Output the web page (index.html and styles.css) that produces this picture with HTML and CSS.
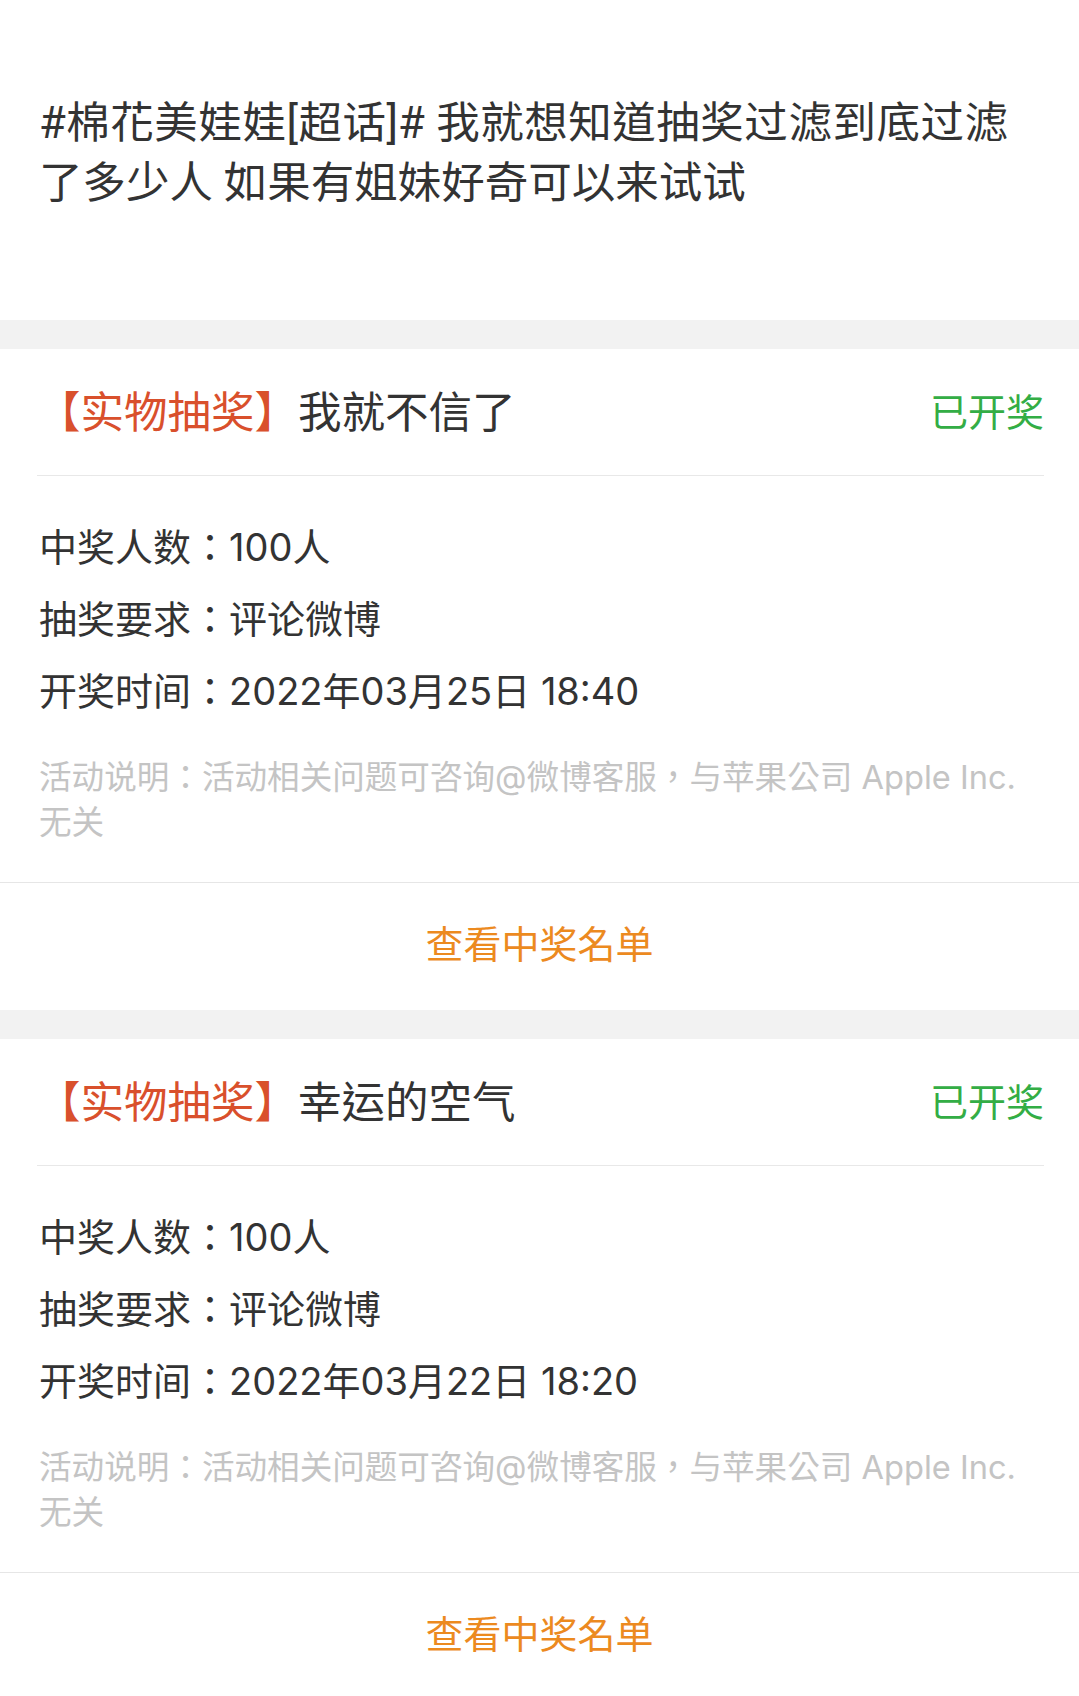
FILE: index.html
```html
<html>
  <head>
    <title>抽奖详情</title>
    <meta charset="utf-8">
    <link rel="stylesheet" href="styles.css">
  </head>
  <body>
    <div class="post">
      <p class="post-text">
        <span class="post-line">#棉花美娃娃[超话]# 我就想知道抽奖过滤到底过滤</span>了多少人 如果有姐妹好奇可以来试试
      </p>
    </div>

    <div class="lottery">
      <div class="lottery-head">
        <div class="lottery-title"><span class="tag">【实物抽奖】</span>我就不信了</div>
        <div class="lottery-status">已开奖</div>
      </div>
      <div class="lottery-info">
        <p>中奖人数：100人</p>
        <p>抽奖要求：评论微博</p>
        <p>开奖时间：2022年03月25日 18:40</p>
        <p class="lottery-note">活动说明：活动相关问题可咨询@微博客服，与苹果公司 Apple Inc. 无关</p>
      </div>
      <div class="lottery-foot">查看中奖名单</div>
    </div>

    <div class="lottery">
      <div class="lottery-head">
        <div class="lottery-title"><span class="tag">【实物抽奖】</span>幸运的空气</div>
        <div class="lottery-status">已开奖</div>
      </div>
      <div class="lottery-info">
        <p>中奖人数：100人</p>
        <p>抽奖要求：评论微博</p>
        <p>开奖时间：2022年03月22日 18:20</p>
        <p class="lottery-note">活动说明：活动相关问题可咨询@微博客服，与苹果公司 Apple Inc. 无关</p>
      </div>
      <div class="lottery-foot">查看中奖名单</div>
    </div>
  </body>
</html>
```

FILE: styles.css
```css
* {
  margin: 0;
  padding: 0;
  box-sizing: border-box;
}
body {
  background-color: #f2f2f2;
  font-family: Inter, "Noto Sans CJK TC", sans-serif;
  color: #333;
}
.post {
  background-color: #fff;
  padding: 94px 71px 106px 39px;
  margin-bottom: 29px;
}
.post-text {
  font-family: Roboto, "Noto Sans CJK TC", sans-serif;
  font-size: 43.5px;
  line-height: 60px;
}
.post-line {
  display: block;
  text-align: justify;
  text-align-last: justify;
}
.lottery {
  background-color: #fff;
  margin-bottom: 29px;
}
.lottery-head {
  margin: 0 35px 0 37px;
  height: 127px;
  display: flex;
  justify-content: space-between;
  align-items: center;
  border-bottom: 1px solid #e8e8e8;
}
.lottery-title {
  font-size: 43.5px;
  margin-top: -6px;
}
.tag {
  color: #d9502c;
}
.lottery-status {
  font-size: 38px;
  color: #33ad45;
  margin-top: -6px;
}
.lottery-info {
  padding: 35px 36px 37px 39px;
  border-bottom: 1px solid #e6e6e6;
  font-size: 38px;
  line-height: 72px;
}
.lottery-note {
  margin-top: 28px;
  font-size: 32.6px;
  line-height: 45px;
  color: #c4c4c4;
}
.lottery-foot {
  height: 127px;
  padding-bottom: 10px;
  display: flex;
  justify-content: center;
  align-items: center;
  font-size: 38px;
  color: #ec8a1f;
}
```
